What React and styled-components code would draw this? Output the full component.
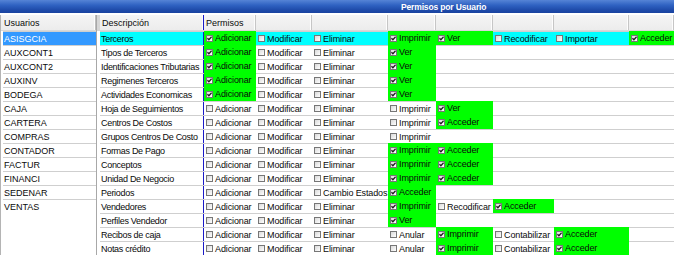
import React from "react";
import styled, { createGlobalStyle } from "styled-components";

const COLORS = {
  GREEN: "#00ff00",
  CYAN: "#00ffff",
  SELECT: "#3399ff",
  LINE: "#cfcfcf",
  HEADER: "#f0f0f0",
  BLUE_LINE: "#1a1ac8",
  TEXT: "#0a0a0a",
};

// column widths of the permission grid (px)
const COL_WIDTHS = [52, 56, 76, 48, 57, 61, 75, 45];

const GlobalStyle = createGlobalStyle`
  html, body {
    margin: 0;
    background: #ffffff;
  }

  body {
    font-family: "Liberation Sans", Arial, sans-serif;
    color: ${COLORS.TEXT};
  }
`;

const Window = styled.div`
  width: 674px;
  height: 255px;
  overflow: hidden;
  background: #ffffff;
  display: flex;
  flex-direction: column;
`;

const TitleBar = styled.div`
  height: 13px;
  margin-bottom: 2px;
  flex: none;
  display: flex;
  align-items: center;
  padding-left: 401px;
  background: linear-gradient(180deg, #5584d6 0%, #2f62c2 40%, #1f4cab 75%, #1a43a0 100%);
  color: #ffffff;
  font-size: 8.5px;
  font-weight: bold;
  letter-spacing: -0.15px;
  white-space: nowrap;
`;

const Body = styled.div`
  flex: 1;
  display: flex;
  min-height: 0;
`;

const UserPanel = styled.div`
  width: 97px;
  flex: none;
  box-sizing: border-box;
  border-left: 1px solid #b4b4b4;
  border-right: 1px solid #a8a8a8;
  display: flex;
  flex-direction: column;
`;

const Splitter = styled.div`
  width: 3px;
  flex: none;
  background: linear-gradient(180deg, #d6d6d6 0 16px, #ffffff 16px);
`;

const GridPanel = styled.div`
  flex: 1;
  display: flex;
  flex-direction: column;
  min-width: 0;
`;

const HeaderRow = styled.div`
  height: 15px;
  flex: none;
  display: flex;
  border-bottom: 1px solid #d8d8d8;
  background: linear-gradient(180deg, #f5f5f5, #ececec);
`;

const HeaderCell = styled.div`
  width: ${(p) => (p.$width ? `${p.$width}px` : "auto")};
  flex: ${(p) => (p.$width ? "none" : "1")};
  box-sizing: border-box;
  display: flex;
  align-items: center;
  padding-left: ${(p) => p.$pad ?? 2}px;
  font-size: 9px;
  white-space: nowrap;
  overflow: hidden;
  border-right: 1px solid ${(p) => p.$edge || "#c6c6c6"};
  box-shadow: inset -1px 0 0 #fdfdfd;
`;

const Row = styled.div`
  height: 13px;
  flex: none;
  display: flex;
  border-top: 1px solid ${COLORS.LINE};
  background: ${(p) => p.$bg || "transparent"};
  font-size: 9px;
  white-space: nowrap;
`;

const UserRow = styled(Row)`
  margin-left: 2px;
  align-items: center;
  padding-left: 1px;
  background: ${(p) => (p.$selected ? COLORS.SELECT : "transparent")};
  color: ${(p) => (p.$selected ? "#ffffff" : COLORS.TEXT)};
`;

const DescCell = styled.div`
  width: 104px;
  flex: none;
  box-sizing: border-box;
  display: flex;
  align-items: center;
  padding-left: 1px;
  overflow: hidden;
  letter-spacing: -0.3px;
  border-right: 1px solid ${COLORS.BLUE_LINE};
`;

const PermCell = styled.div`
  width: ${(p) => p.$width}px;
  flex: none;
  box-sizing: border-box;
  display: flex;
  align-items: center;
  gap: 2px;
  padding-left: 2px;
  overflow: hidden;
  letter-spacing: -0.12px;
  background: ${(p) => (p.$on ? COLORS.GREEN : "transparent")};
  margin-top: ${(p) => (p.$on ? "-1px" : "0")};
  height: ${(p) => (p.$on ? "14px" : "13px")};
`;

const Box = styled.span`
  width: 7px;
  height: 7px;
  flex: none;
  box-sizing: border-box;
  border: 1px solid #767676;
  background: linear-gradient(135deg, #d9d9d9, #ffffff);
  display: inline-flex;
  align-items: center;
  justify-content: center;
`;

function CheckBox({ checked }) {
  return (
    <Box>
      {checked && (
        <svg width="5" height="5" viewBox="0 0 5 5">
          <path d="M0.4 2.3 L1.9 3.8 L4.6 0.8" fill="none" stroke="#1e1e1e" strokeWidth="1.3" />
        </svg>
      )}
    </Box>
  );
}

const USERS = [
  "ASISGCIA",
  "AUXCONT1",
  "AUXCONT2",
  "AUXINV",
  "BODEGA",
  "CAJA",
  "CARTERA",
  "COMPRAS",
  "CONTADOR",
  "FACTUR",
  "FINANCI",
  "SEDENAR",
  "VENTAS",
];

// "+" prefix = checked permission
const base = ["Adicionar", "Modificar", "Eliminar"];
const ROWS = [
  { desc: "Terceros", bg: COLORS.CYAN, perms: ["+Adicionar", "Modificar", "Eliminar", "+Imprimir", "+Ver", "Recodificar", "Importar", "+Acceder"] },
  { desc: "Tipos de Terceros", perms: ["+Adicionar", "Modificar", "Eliminar", "+Ver"] },
  { desc: "Identificaciones Tributarias", perms: ["+Adicionar", "Modificar", "Eliminar", "+Ver"] },
  { desc: "Regimenes Terceros", perms: ["+Adicionar", "Modificar", "Eliminar", "+Ver"] },
  { desc: "Actividades Economicas", perms: ["+Adicionar", "Modificar", "Eliminar", "+Ver"] },
  { desc: "Hoja de Seguimientos", perms: [...base, "Imprimir", "+Ver"] },
  { desc: "Centros De Costos", perms: [...base, "Imprimir", "+Acceder"] },
  { desc: "Grupos Centros De Costo", perms: [...base, "Imprimir"] },
  { desc: "Formas De Pago", perms: [...base, "+Imprimir", "+Acceder"] },
  { desc: "Conceptos", perms: [...base, "+Imprimir", "+Acceder"] },
  { desc: "Unidad De Negocio", perms: [...base, "+Imprimir", "+Acceder"] },
  { desc: "Periodos", perms: ["Adicionar", "Modificar", "Cambio Estados", "+Acceder"] },
  { desc: "Vendedores", perms: [...base, "+Imprimir", "Recodificar", "+Acceder"] },
  { desc: "Perfiles Vendedor", perms: [...base, "+Ver"] },
  { desc: "Recibos de caja", perms: [...base, "Anular", "+Imprimir", "Contabilizar", "+Acceder"] },
  { desc: "Notas crédito", perms: [...base, "Anular", "+Imprimir", "Contabilizar", "+Acceder"] },
];

export default function App() {
  return (
    <>
      <GlobalStyle />
      <Window>
        <TitleBar>Permisos por Usuario</TitleBar>
        <Body>
          <UserPanel>
            <HeaderRow>
              <HeaderCell $pad={3} $edge="#bdbdbd">Usuarios</HeaderCell>
            </HeaderRow>
            {USERS.map((u, i) => (
              <UserRow key={u} $selected={i === 0}>
                {u}
              </UserRow>
            ))}
          </UserPanel>
          <Splitter />
          <GridPanel>
            <HeaderRow>
              <HeaderCell $width={104} $edge={COLORS.BLUE_LINE}>
                Descripción
              </HeaderCell>
              {COL_WIDTHS.map((w, i) => (
                <HeaderCell key={i} $width={w}>
                  {i === 0 ? "Permisos" : ""}
                </HeaderCell>
              ))}
            </HeaderRow>
            {ROWS.map((r) => (
              <Row key={r.desc} $bg={r.bg}>
                <DescCell>{r.desc}</DescCell>
                {r.perms.map((p, i) => {
                  const on = p.startsWith("+");
                  const label = on ? p.slice(1) : p;
                  return (
                    <PermCell key={i} $width={COL_WIDTHS[i]} $on={on}>
                      <CheckBox checked={on} />
                      {label}
                    </PermCell>
                  );
                })}
              </Row>
            ))}
          </GridPanel>
        </Body>
      </Window>
    </>
  );
}
